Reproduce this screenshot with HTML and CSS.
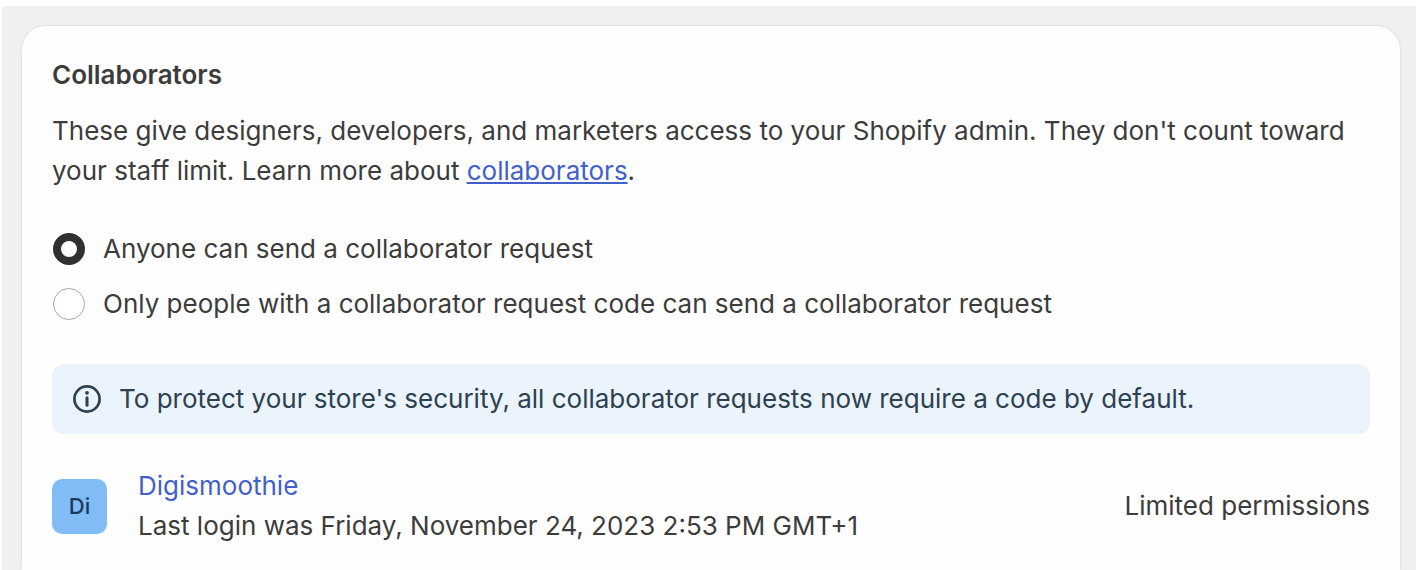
FILE: index.html
```html
<!DOCTYPE html>
<html lang="en">
<head>
    <meta charset="UTF-8">
    <meta name="viewport" content="width=device-width, initial-scale=1.0">
    <title>Collaborators</title>
    <link rel="stylesheet" href="styles.css">
</head>
<body>
    <main class="page">
        <section class="card">
            <h2>Collaborators</h2>
            <p class="intro">These give designers, developers, and marketers access to your Shopify admin. They don't count toward your staff limit. Learn more about <a href="#">collaborators</a>.</p>

            <div class="radio-group">
                <div class="radio-option">
                    <input type="radio" name="requests" id="requestsAnyone" checked>
                    <label for="requestsAnyone">Anyone can send a collaborator request</label>
                </div>
                <div class="radio-option">
                    <input type="radio" name="requests" id="requestsCode">
                    <label for="requestsCode">Only people with a collaborator request code can send a collaborator request</label>
                </div>
            </div>

            <div class="banner">
                <svg class="banner-icon" viewBox="0 0 28 28" aria-hidden="true">
                    <circle cx="14" cy="14" r="12.6" fill="none" stroke="currentColor" stroke-width="2.7"/>
                    <circle cx="14" cy="7.8" r="1.9" fill="currentColor"/>
                    <path d="M14 12.8v7.4" stroke="currentColor" stroke-width="3" stroke-linecap="round"/>
                </svg>
                <p>To protect your store's security, all collaborator requests now require a code by default.</p>
            </div>

            <div class="collaborator">
                <span class="avatar">Di</span>
                <div class="details">
                    <a href="#">Digismoothie</a>
                    <p>Last login was Friday, November 24, 2023 2:53 PM GMT+1</p>
                </div>
                <span class="permissions">Limited permissions</span>
            </div>
        </section>
    </main>
</body>
</html>
```

FILE: styles.css
```css
* {
    box-sizing: border-box;
}
body {
    margin: 0;
    padding-top: 6px;
    background-color: #fff;
    font-family: Inter, "Liberation Sans", sans-serif;
    font-size: 26px;
    line-height: 40px;
    color: #3c3c3c;
}
h2, p {
    margin: 0;
}
a {
    color: #4260cc;
}
.page {
    min-height: calc(100vh - 6px);
    margin-left: 2px;
    padding: 20px 16px 0 20px;
    background-color: #f0f0f0;
    display: flex;
}
.card {
    flex: 1;
    padding: 29px 30px 24px;
    background-color: #fefefe;
    border-radius: 24px 24px 0 0;
    box-shadow: 0 0 3px rgba(0, 0, 0, 0.12);
}
h2 {
    font-size: 26px;
    font-weight: 600;
}
.intro {
    margin-top: 16px;
}
.radio-group {
    display: flex;
    flex-direction: column;
    gap: 15px;
    margin-top: 38px;
}
.radio-option {
    display: flex;
    align-items: center;
    gap: 17px;
}
.radio-option input {
    appearance: none;
    flex: none;
    width: 32px;
    height: 32px;
    margin: 0 1px;
    border: 1px solid #aaa;
    border-radius: 50%;
    background-color: #fff;
}
.radio-option input:checked {
    border: 8px solid #303030;
}
.banner {
    display: flex;
    align-items: center;
    gap: 18px;
    margin-top: 40px;
    padding: 15px 21px;
    border-radius: 12px;
    background-color: #ebf3fd;
    color: #2c4152;
}
.banner-icon {
    flex: none;
    width: 28px;
    height: 28px;
}
.collaborator {
    display: flex;
    align-items: center;
    margin-top: 32px;
}
.avatar {
    flex: none;
    width: 55px;
    height: 55px;
    border-radius: 10px;
    background-color: #81bcf6;
    color: #1c3a5e;
    font-size: 22px;
    font-weight: 500;
    line-height: 55px;
    text-align: center;
}
.details {
    flex: 1;
    margin-left: 31px;
}
.details a {
    text-decoration: none;
}
```
